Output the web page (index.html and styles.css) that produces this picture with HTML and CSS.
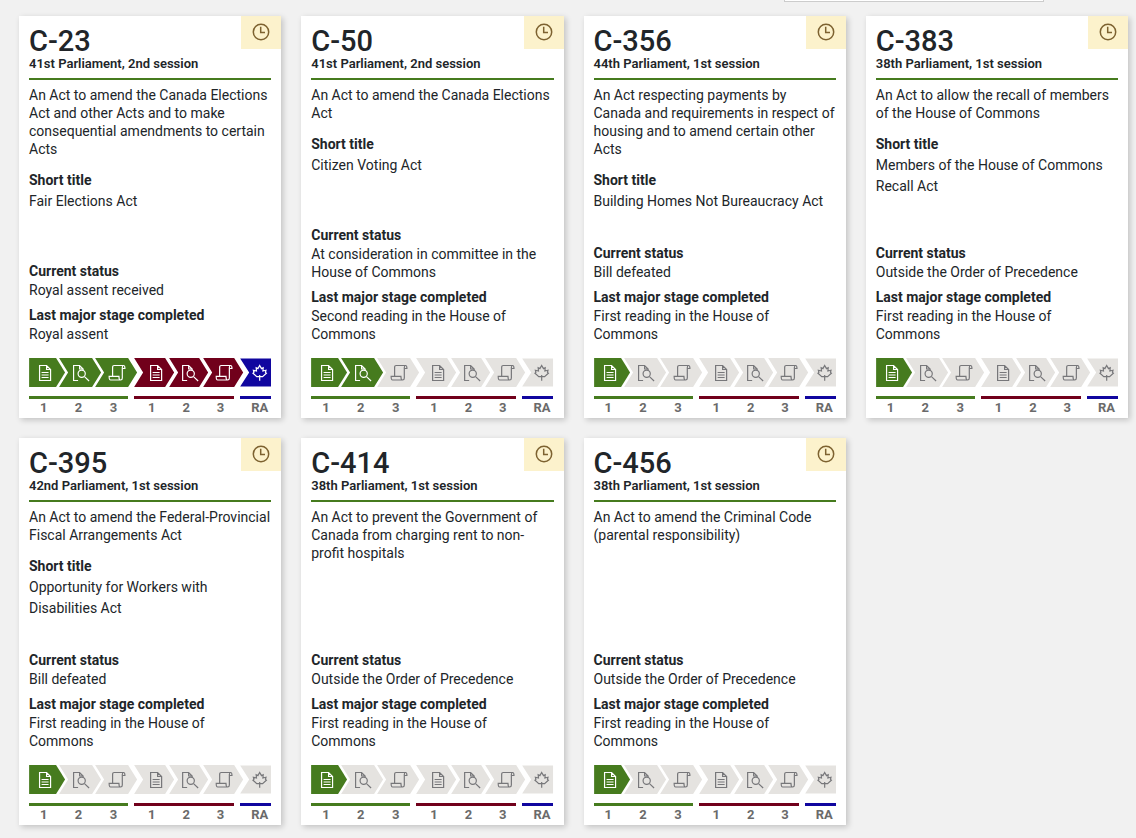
FILE: index.html
```html
<!DOCTYPE html>
<html lang="en">
<head>
  <meta charset="UTF-8">
  <meta name="viewport" content="width=device-width, initial-scale=1.0">
  <title>Bills</title>
  <link rel="stylesheet" href="styles.css">
</head>
<body>
  <!-- Shared icons -->
  <svg class="sprite" aria-hidden="true">
    <symbol id="clock" viewBox="0 0 18 18">
      <circle cx="9" cy="9" r="7.7"/>
      <path d="M8.7 3.8V9.6H13"/>
    </symbol>
    <symbol id="document" viewBox="0 0 18 18">
      <path d="M1.5 1.5H8.5L12.5 5.5V16.5H1.5ZM8.5 1.5V5.5H12.5M3.5 8.5H10.5M3.5 11H10.5M3.5 13.5H10.5"/>
    </symbol>
    <symbol id="search" viewBox="0 0 18 18">
      <path d="M6 16.5H1.5V1.5H7.5L11 5V6.2M7.5 1.5V5H11M12.4 12.6L17 17"/>
      <circle cx="9.6" cy="9.8" r="3.6"/>
    </symbol>
    <symbol id="scroll" viewBox="0 0 18 18">
      <path d="M4.5 12V3.5C4.5 2 5.2 1.5 6 1.5H15.5C16.5 1.5 16.8 2.2 16.8 4.5H14.2M15.5 1.5C14.5 1.5 14.2 2.2 14.2 3.5V14C14.2 15.3 13.6 16 12.5 16H2.5C1.3 16 1 15 1 12.3H10.8C10.8 15 11.2 16 12.5 16"/>
    </symbol>
    <symbol id="leaf" viewBox="0 0 18 18">
      <path d="M8.5 1.5L10.3 4.6L12 3.8L11.7 7L14.8 6.2L14.3 8.4L15.2 9.2L11.4 12.6H5.6L1.8 9.2L2.7 8.4L2.2 6.2L5.3 7L5 3.8L6.7 4.6ZM8.5 11V16.8"/>
    </symbol>
    <symbol id="progress" viewBox="0 0 242 29">
      <path class="step-1" d="M0 0H27L36 14.5L27 29H0Z"/>
      <path class="step-2" d="M30 0H63L72 14.5L63 29H30L39 14.5Z"/>
      <path class="step-3" d="M66 0H99L108 14.5L99 29H66L75 14.5Z"/>
      <path class="step-4" d="M105 0H136L145 14.5L136 29H105L114 14.5Z"/>
      <path class="step-5" d="M140 0H170L179 14.5L170 29H140L149 14.5Z"/>
      <path class="step-6" d="M174 0H205L214 14.5L205 29H174L183 14.5Z"/>
      <path class="step-7" d="M211 0.5H242V28.5H211L220 14.5Z"/>
      <use class="icon-1" href="#document" x="9" y="6" width="18" height="18"/>
      <use class="icon-2" href="#search" x="43" y="6" width="18" height="18"/>
      <use class="icon-3" href="#scroll" x="79" y="6" width="18" height="18"/>
      <use class="icon-4" href="#document" x="120" y="6" width="18" height="18"/>
      <use class="icon-5" href="#search" x="152" y="6" width="18" height="18"/>
      <use class="icon-6" href="#scroll" x="186" y="6" width="18" height="18"/>
      <use class="icon-7" href="#leaf" x="222" y="6" width="18" height="18"/>
    </symbol>
  </svg>

  <div class="toolbar">
    <div class="toolbar-field"></div>
  </div>

  <main class="bills">
    <a class="bill" href="#c-23">
      <span class="badge"><svg><use href="#clock"/></svg></span>
      <h2>C-23</h2>
      <div class="session">41st Parliament, 2nd session</div>
      <p class="title">An Act to amend the Canada Elections Act and other Acts and to make consequential amendments to certain Acts</p>
      <h3>Short title</h3>
      <p class="short-title">Fair Elections Act</p>
      <div class="status">
        <h3>Current status</h3>
        <p>Royal assent received</p>
        <h3>Last major stage completed</h3>
        <p>Royal assent</p>
      </div>
      <svg class="progress royal-assent" viewBox="0 0 242 29"><use href="#progress"/></svg>
      <div class="stages">
        <div class="house"><span>1</span><span>2</span><span>3</span></div>
        <div class="senate"><span>1</span><span>2</span><span>3</span></div>
        <div class="assent"><span>RA</span></div>
      </div>
    </a>

    <a class="bill" href="#c-50">
      <span class="badge"><svg><use href="#clock"/></svg></span>
      <h2>C-50</h2>
      <div class="session">41st Parliament, 2nd session</div>
      <p class="title">An Act to amend the Canada Elections Act</p>
      <h3>Short title</h3>
      <p class="short-title">Citizen Voting Act</p>
      <div class="status">
        <h3>Current status</h3>
        <p>At consideration in committee in the House of Commons</p>
        <h3>Last major stage completed</h3>
        <p>Second reading in the House of Commons</p>
      </div>
      <svg class="progress second-reading" viewBox="0 0 242 29"><use href="#progress"/></svg>
      <div class="stages">
        <div class="house"><span>1</span><span>2</span><span>3</span></div>
        <div class="senate"><span>1</span><span>2</span><span>3</span></div>
        <div class="assent"><span>RA</span></div>
      </div>
    </a>

    <a class="bill" href="#c-356">
      <span class="badge"><svg><use href="#clock"/></svg></span>
      <h2>C-356</h2>
      <div class="session">44th Parliament, 1st session</div>
      <p class="title">An Act respecting payments by Canada and requirements in respect of housing and to amend certain other Acts</p>
      <h3>Short title</h3>
      <p class="short-title">Building Homes Not Bureaucracy Act</p>
      <div class="status">
        <h3>Current status</h3>
        <p>Bill defeated</p>
        <h3>Last major stage completed</h3>
        <p>First reading in the House of Commons</p>
      </div>
      <svg class="progress" viewBox="0 0 242 29"><use href="#progress"/></svg>
      <div class="stages">
        <div class="house"><span>1</span><span>2</span><span>3</span></div>
        <div class="senate"><span>1</span><span>2</span><span>3</span></div>
        <div class="assent"><span>RA</span></div>
      </div>
    </a>

    <a class="bill" href="#c-383">
      <span class="badge"><svg><use href="#clock"/></svg></span>
      <h2>C-383</h2>
      <div class="session">38th Parliament, 1st session</div>
      <p class="title">An Act to allow the recall of members of the House of Commons</p>
      <h3>Short title</h3>
      <p class="short-title">Members of the House of Commons Recall Act</p>
      <div class="status">
        <h3>Current status</h3>
        <p>Outside the Order of Precedence</p>
        <h3>Last major stage completed</h3>
        <p>First reading in the House of Commons</p>
      </div>
      <svg class="progress" viewBox="0 0 242 29"><use href="#progress"/></svg>
      <div class="stages">
        <div class="house"><span>1</span><span>2</span><span>3</span></div>
        <div class="senate"><span>1</span><span>2</span><span>3</span></div>
        <div class="assent"><span>RA</span></div>
      </div>
    </a>

    <a class="bill" href="#c-395">
      <span class="badge"><svg><use href="#clock"/></svg></span>
      <h2>C-395</h2>
      <div class="session">42nd Parliament, 1st session</div>
      <p class="title">An Act to amend the Federal-Provincial Fiscal Arrangements Act</p>
      <h3>Short title</h3>
      <p class="short-title">Opportunity for Workers with Disabilities Act</p>
      <div class="status">
        <h3>Current status</h3>
        <p>Bill defeated</p>
        <h3>Last major stage completed</h3>
        <p>First reading in the House of Commons</p>
      </div>
      <svg class="progress" viewBox="0 0 242 29"><use href="#progress"/></svg>
      <div class="stages">
        <div class="house"><span>1</span><span>2</span><span>3</span></div>
        <div class="senate"><span>1</span><span>2</span><span>3</span></div>
        <div class="assent"><span>RA</span></div>
      </div>
    </a>

    <a class="bill" href="#c-414">
      <span class="badge"><svg><use href="#clock"/></svg></span>
      <h2>C-414</h2>
      <div class="session">38th Parliament, 1st session</div>
      <p class="title">An Act to prevent the Government of Canada from charging rent to non-profit hospitals</p>
      <div class="status">
        <h3>Current status</h3>
        <p>Outside the Order of Precedence</p>
        <h3>Last major stage completed</h3>
        <p>First reading in the House of Commons</p>
      </div>
      <svg class="progress" viewBox="0 0 242 29"><use href="#progress"/></svg>
      <div class="stages">
        <div class="house"><span>1</span><span>2</span><span>3</span></div>
        <div class="senate"><span>1</span><span>2</span><span>3</span></div>
        <div class="assent"><span>RA</span></div>
      </div>
    </a>

    <a class="bill" href="#c-456">
      <span class="badge"><svg><use href="#clock"/></svg></span>
      <h2>C-456</h2>
      <div class="session">38th Parliament, 1st session</div>
      <p class="title">An Act to amend the Criminal Code (parental responsibility)</p>
      <div class="status">
        <h3>Current status</h3>
        <p>Outside the Order of Precedence</p>
        <h3>Last major stage completed</h3>
        <p>First reading in the House of Commons</p>
      </div>
      <svg class="progress" viewBox="0 0 242 29"><use href="#progress"/></svg>
      <div class="stages">
        <div class="house"><span>1</span><span>2</span><span>3</span></div>
        <div class="senate"><span>1</span><span>2</span><span>3</span></div>
        <div class="assent"><span>RA</span></div>
      </div>
    </a>
  </main>
</body>
</html>
```
FILE: styles.css
```css
* {
  box-sizing: border-box;
}
body {
  margin: 0;
  background-color: #f1f1f1;
  color: #212529;
  font-family: Roboto, "Liberation Sans", sans-serif;
  font-size: 14px;
  line-height: 18px;
}
h2, h3, p {
  margin: 0;
}
.sprite {
  display: none;
}
.toolbar {
  display: flex;
  justify-content: flex-end;
  padding-right: 92px;
}
.toolbar-field {
  width: 260px;
  height: 2px;
  background-color: #fff;
  border: 1px solid #ccc;
  border-top: none;
}
.bills {
  display: grid;
  grid-template-columns: repeat(4, 1fr);
  gap: 20px;
  padding: 14px 8px 13px 19px;
}
.bill {
  position: relative;
  display: flex;
  flex-direction: column;
  padding: 10px 10px 1px;
  background-color: #fff;
  box-shadow: 2px 2px 6px rgba(0, 0, 0, 0.2);
  color: inherit;
  text-decoration: none;
}
.badge {
  position: absolute;
  top: 0;
  right: 0;
  display: flex;
  align-items: center;
  justify-content: center;
  width: 40px;
  height: 33px;
  padding-bottom: 1px;
  background-color: #fcf2cc;
}
.badge svg {
  width: 18px;
  height: 18px;
  fill: none;
  stroke: #7d6230;
  stroke-width: 1.5;
}
.bill h2 {
  font-size: 29px;
  line-height: 30px;
  font-weight: 500;
}
.session {
  padding-bottom: 7px;
  border-bottom: 2px solid #467b1e;
  font-size: 13px;
  line-height: 15px;
  font-weight: 600;
}
.title {
  margin: 6px 0 11px;
}
.bill h3 {
  font-size: 14px;
  line-height: 20px;
  font-weight: 700;
}
.bill .title + h3 {
  line-height: 22px;
}
.bill .short-title {
  line-height: 21px;
}
.status {
  margin-top: auto;
  padding-top: 31px;
}
.status p + h3 {
  margin-top: 6px;
}

/* Progress arrows, the first reading is always done */
.progress {
  --done-2: #e5e3e0;
  --rest: #e5e3e0;
  --senate: #e5e3e0;
  --assent: #e5e3e0;
  --line-2: #77777a;
  --line: #77777a;
  display: block;
  width: 100%;
  margin-top: 15px;
}
.second-reading {
  --done-2: #467b1e;
  --line-2: #fff;
}
.royal-assent {
  --done-2: #467b1e;
  --rest: #467b1e;
  --senate: #71001b;
  --assent: #10069f;
  --line-2: #fff;
  --line: #fff;
}
.step-1 {
  fill: #467b1e;
}
.step-2 {
  fill: var(--done-2);
}
.step-3 {
  fill: var(--rest);
}
.step-4, .step-5, .step-6 {
  fill: var(--senate);
}
.step-7 {
  fill: var(--assent);
}
.icon-1, .icon-2, .icon-3, .icon-4, .icon-5, .icon-6, .icon-7 {
  fill: none;
  stroke: var(--line);
  stroke-width: 1.2;
}
.icon-1 {
  stroke: #fff;
}
.icon-2 {
  stroke: var(--line-2);
}

.stages {
  display: grid;
  grid-template-columns: 99fr 100fr 31fr;
  gap: 6px;
  margin-top: 9px;
  color: #6a6a6a;
  font-size: 13px;
  line-height: 18px;
  font-weight: 700;
}
.stages div {
  display: flex;
  justify-content: space-between;
  padding: 0 11px;
  border-top: 3px solid #467b1e;
}
.stages .senate {
  padding: 0 10px 0 14px;
  border-color: #71001b;
}
.stages .assent {
  justify-content: flex-end;
  padding: 0 3px;
  border-color: #10069f;
}
```
